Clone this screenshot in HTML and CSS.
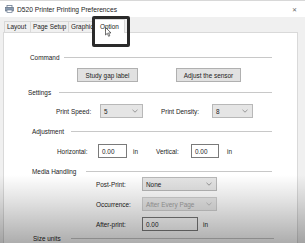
FILE: index.html
```html
<!DOCTYPE html>
<html>
<head>
<meta charset="utf-8">
<link rel="stylesheet" href="styles.css">
</head>
<body>
<div class="win">
  <div class="titlebar">
    <svg class="picon" width="9" height="8" viewBox="0 0 9 8">
      <rect x="2" y="0.5" width="5" height="2.5" fill="#fff" stroke="#6a7a90" stroke-width="0.8"/>
      <rect x="0.5" y="2.5" width="8" height="3.5" fill="#8a9bb0" stroke="#5c6a7e" stroke-width="0.6"/>
      <rect x="2" y="5" width="5" height="2.5" fill="#fff" stroke="#6a7a90" stroke-width="0.7"/>
    </svg>
    <span class="ttl">D520 Printer Printing Preferences</span>
    <span class="close">✕</span>
  </div>
  <div class="tabs">
    <div class="tab t1">Layout</div>
    <div class="tab t2">Page Setup</div>
    <div class="tab t3">Graphics</div>
    <div class="tab sel">Option</div>
  </div>
  <div class="panel">
    <div class="sec s-command"><span>Command</span><i></i></div>
    <div class="row r-btn">
      <div class="btn b1">Study gap label</div>
      <div class="btn b2">Adjust the sensor</div>
    </div>
    <div class="sec s-settings"><span>Settings</span><i></i></div>
    <div class="row r-sel">
      <span class="lbl l-speed">Print Speed:</span>
      <div class="combo c-speed"><span>5</span><svg class="chev" width="6" height="4" viewBox="0 0 6 4"><polyline points="0.5,0.8 3,3.2 5.5,0.8" fill="none" stroke="#777" stroke-width="0.7"/></svg></div>
      <span class="lbl l-density">Print Density:</span>
      <div class="combo c-density"><span>8</span><svg class="chev" width="6" height="4" viewBox="0 0 6 4"><polyline points="0.5,0.8 3,3.2 5.5,0.8" fill="none" stroke="#777" stroke-width="0.7"/></svg></div>
    </div>
    <div class="sec s-adjust"><span>Adjustment</span><i></i></div>
    <div class="row r-inp">
      <span class="lbl l-hor">Horizontal:</span>
      <div class="field f-hor">0.00</div>
      <span class="unit u-hor">in</span>
      <span class="lbl l-ver">Vertical:</span>
      <div class="field f-ver">0.00</div>
      <span class="unit u-ver">in</span>
    </div>
    <div class="sec s-media"><span>Media Handling</span><i></i></div>
    <div class="row r-media r-post">
      <span class="lbl l-media">Post-Print:</span>
      <div class="combo c-media"><span>None</span><svg class="chev" width="6" height="4" viewBox="0 0 6 4"><polyline points="0.5,0.8 3,3.2 5.5,0.8" fill="none" stroke="#777" stroke-width="0.7"/></svg></div>
    </div>
    <div class="row r-media r-occ">
      <span class="lbl l-media">Occurrence:</span>
      <div class="combo c-media dis"><span>After Every Page</span><svg class="chev" width="6" height="4" viewBox="0 0 6 4"><polyline points="0.5,0.8 3,3.2 5.5,0.8" fill="none" stroke="#aaa" stroke-width="0.7"/></svg></div>
    </div>
    <div class="row r-media r-after">
      <span class="lbl l-media">After-print:</span>
      <div class="field f-after">0.00</div>
      <span class="unit u-after">in</span>
    </div>
    <div class="sec s-size"><span>Size units</span><i></i></div>
  </div>
  <div class="highlight"></div>
  <svg class="cursor" width="7" height="10" viewBox="0 0 7 10">
    <path d="M0.5 0.5 L0.5 8 L2.3 6.3 L3.6 9.3 L4.8 8.8 L3.6 5.9 L6 5.9 Z" fill="#fff" stroke="#333" stroke-width="0.7"/>
  </svg>
  <div class="vignette"></div>
</div>
</body>
</html>
```

FILE: styles.css
```css
html, body {
  margin: 0;
  padding: 0;
}
body {
  width: 305px;
  height: 243px;
  overflow: hidden;
  background: #f0f0f0;
  font-family: "Liberation Sans", Arial, sans-serif;
  font-size: 6.4px;
  color: #222;
}
.win {
  position: relative;
  width: 305px;
  height: 243px;
  overflow: hidden;
  background: #f0f0f0;
}
.titlebar {
  height: 17px;
  background: #fff;
  display: flex;
  align-items: center;
  padding-left: 5px;
  border-top: 1px solid #d8d8d8;
  box-sizing: border-box;
}
.picon {
  margin-right: 3px;
}
.ttl {
  font-size: 6.7px;
  color: #1e1e1e;
  flex: 1;
}
.close {
  font-size: 6px;
  color: #666;
  margin-right: 8px;
}
.tabs {
  height: 15px;
  display: flex;
  align-items: flex-end;
  padding-left: 4px;
}
.tab {
  height: 11px;
  box-sizing: border-box;
  border: 1px solid #d9d9d9;
  border-bottom: none;
  background: #f0f0f0;
  line-height: 10px;
  padding-left: 2px;
  white-space: nowrap;
  overflow: hidden;
  margin-right: -1px;
}
.t1 { width: 27px; }
.t2 { width: 39px; }
.t3 { width: 29px; }
.sel {
  width: 32px;
  height: 14px;
  background: #fff;
  margin-left: -3px;
  margin-bottom: -1px;
  position: relative;
  z-index: 2;
  padding-left: 6px;
  line-height: 13px;
}
.panel {
  margin-left: 3px;
  width: 295px;
  height: 230px;
  box-sizing: border-box;
  background: #fff;
  border: 1px solid #d9d9d9;
  display: flex;
  flex-direction: column;
}
.sec {
  height: 10px;
  display: flex;
  align-items: center;
  padding-left: 26px;
  padding-right: 25px;
  flex-shrink: 0;
}
.sec span {
  white-space: nowrap;
}
.sec i {
  flex: 1;
  height: 0;
  border-top: 1px solid #c8c8c8;
  margin-left: 5px;
}
.s-command { margin-top: 19px; }
.s-settings { margin-top: 5px; padding-left: 24px; }
.s-adjust { margin-top: 8px; padding-left: 28px; }
.s-media { margin-top: 8px; padding-left: 28px; }
.s-media i { margin-left: 10px; }
.s-size { margin-top: 2px; padding-left: 29px; padding-right: 23px; }
.s-size i { margin-left: 10px; }
.s-adjust i { margin-left: 7px; }
.s-settings i { margin-left: 8px; }
.row {
  display: flex;
  align-items: center;
  height: 14px;
  flex-shrink: 0;
}
.r-btn { margin-top: 6px; padding-left: 73px; }
.btn {
  height: 14px;
  box-sizing: border-box;
  background: #e1e1e1;
  border: 1px solid #b0b0b0;
  display: flex;
  align-items: center;
  justify-content: center;
  white-space: nowrap;
}
.b1 { width: 61px; }
.b2 { width: 65px; margin-left: 38px; }
.r-sel { margin-top: 7px; padding-left: 52px; }
.lbl {
  white-space: nowrap;
}
.l-speed { width: 44px; }
.l-density { width: 51px; margin-left: 18px; }
.combo {
  height: 14px;
  box-sizing: border-box;
  background: #e5e5e5;
  border: 1px solid #b8b8b8;
  display: flex;
  align-items: center;
  padding-left: 3px;
  padding-right: 4px;
  white-space: nowrap;
}
.combo span { flex: 1; }
.c-speed { width: 43px; }
.c-density { width: 41px; }
.r-inp { margin-top: 8px; padding-left: 53px; }
.l-hor { width: 41px; }
.l-ver { width: 35px; }
.field {
  height: 14px;
  box-sizing: border-box;
  background: #fff;
  border: 1px solid #7a7a7a;
  display: flex;
  align-items: center;
  padding-left: 3px;
}
.f-hor { width: 29px; }
.f-ver { width: 28px; }
.unit { margin-left: 6px; }
.u-hor { width: 23px; }
.u-ver { margin-left: 8px; }
.r-media { padding-left: 92px; }
.r-post { margin-top: 1px; }
.r-occ { margin-top: 6px; }
.r-after { margin-top: 6px; }
.l-media { width: 46px; }
.c-media { width: 75px; }
.dis {
  color: #a0a0a0;
  background: #e8e8e8;
  border-color: #d0d0d0;
}
.f-after { width: 56px; }
.u-after { margin-left: 5px; }
.highlight {
  position: absolute;
  left: 92px;
  top: 16px;
  width: 38px;
  height: 31px;
  box-sizing: border-box;
  border: 3px solid #2a2a2a;
  border-radius: 2px;
  z-index: 5;
}
.cursor {
  position: absolute;
  left: 105px;
  top: 27px;
  z-index: 6;
}
.vignette {
  position: absolute;
  left: 0;
  right: 0;
  top: 175px;
  bottom: 0;
  background: linear-gradient(to bottom, rgba(0,0,0,0) 0%, rgba(0,0,0,0.12) 40%, rgba(0,0,0,0.32) 100%);
  pointer-events: none;
  z-index: 10;
}
```
